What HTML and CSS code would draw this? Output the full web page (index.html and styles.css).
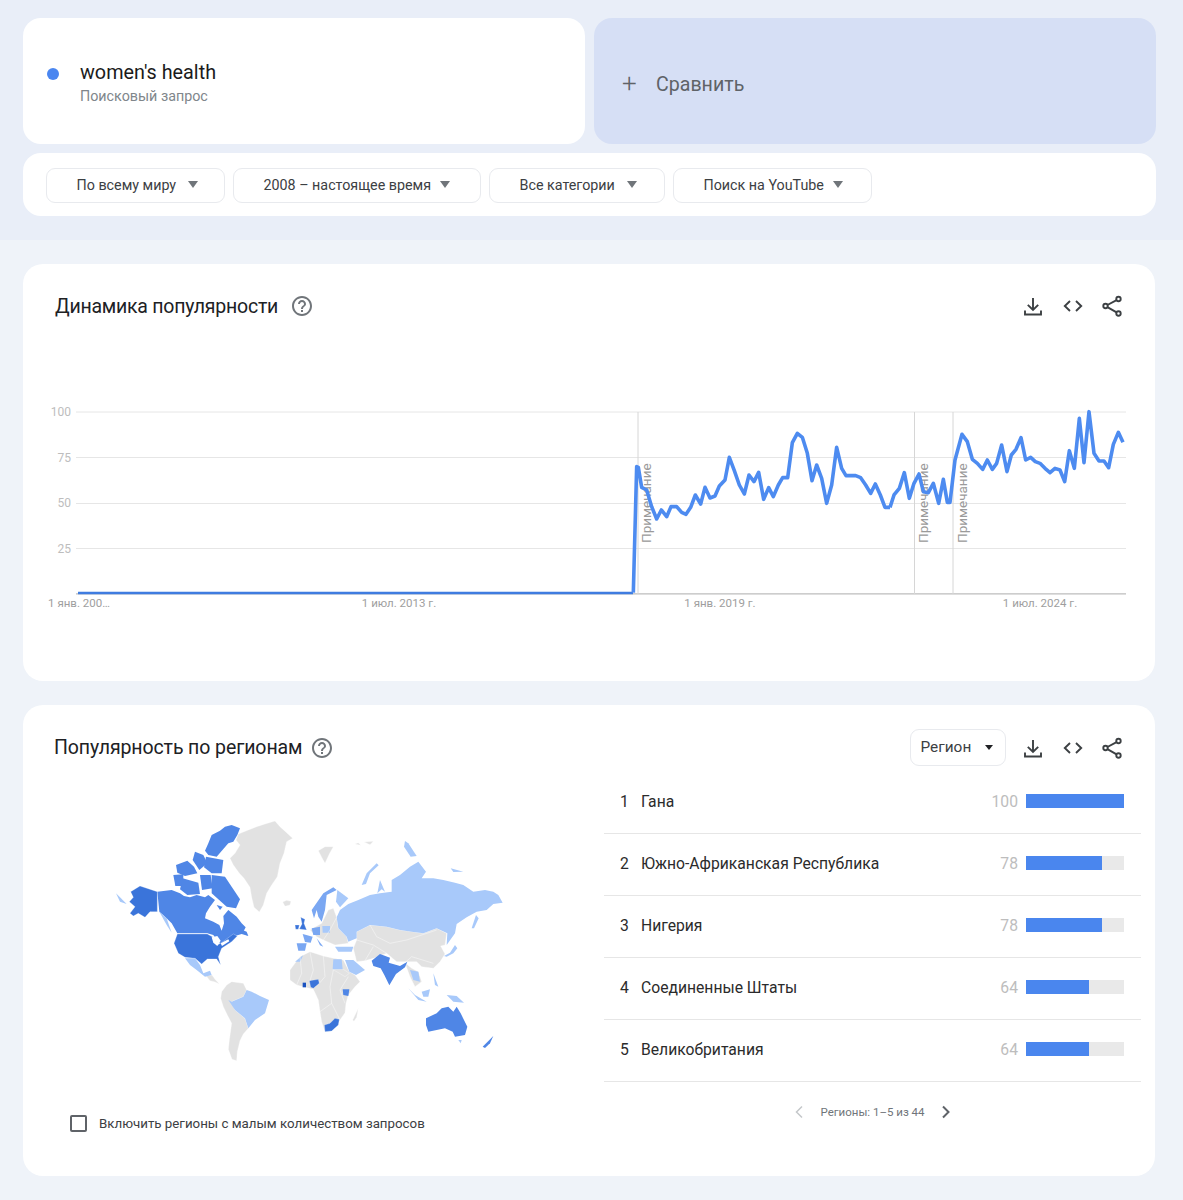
FILE: index.html
```html
<!DOCTYPE html>
<html lang="ru">
<head>
<meta charset="utf-8">
<title>Google Trends</title>
<link rel="stylesheet" href="styles.css">
</head>
<body>
<svg class="defs" width="0" height="0" aria-hidden="true">
  <symbol id="i-help" viewBox="0 0 24 24"><path d="M11 18h2v-2h-2v2zm1-16C6.48 2 2 6.48 2 12s4.48 10 10 10 10-4.48 10-10S17.52 2 12 2zm0 18c-4.41 0-8-3.59-8-8s3.59-8 8-8 8 3.59 8 8-3.59 8-8 8zm0-14c-2.21 0-4 1.79-4 4h2c0-1.1.9-2 2-2s2 .9 2 2c0 2-3 1.75-3 5h2c0-2.25 3-2.5 3-5 0-2.21-1.79-4-4-4z"/></symbol>
  <symbol id="i-down" viewBox="0 0 24 24"><path class="ln" d="M12 4v11.5M6.8 10.8l5.2 5.2 5.2-5.2M4 16.5V20.500h16V16.500"/></symbol>
  <symbol id="i-code" viewBox="0 0 24 24"><path class="ln" d="M9 7l-5.200 5 5.200 5M15 7l5.200 5-5.200 5"/></symbol>
  <symbol id="i-share" viewBox="0 0 24 24"><g class="ln"><circle cx="18.500" cy="5" r="2.200"/><circle cx="5.500" cy="12" r="2.200"/><circle cx="18.500" cy="19.500" r="2.200"/><path d="M16.600 6.100L7.400 11M7.400 13.100l9.200 5.300"/></g></symbol>
</svg>

<section class="top">
  <div class="terms">
    <div class="term">
      <span class="dot"></span>
      <div>
        <div class="term-name">women's health</div>
        <div class="term-type">Поисковый запрос</div>
      </div>
    </div>
    <div class="compare"><span class="plus">+</span><span>Сравнить</span></div>
  </div>
  <div class="filters">
    <div class="pill pill-a">По всему миру<span class="caret"></span></div>
    <div class="pill pill-b">2008 – настоящее время<span class="caret"></span></div>
    <div class="pill pill-c">Все категории<span class="caret"></span></div>
    <div class="pill pill-d">Поиск на YouTube<span class="caret"></span></div>
  </div>
</section>

<main class="lower">
  <section class="card card-trend">
    <header class="head">
      <h2 class="title">Динамика популярности</h2>
      <svg class="help"><use href="#i-help"/></svg>
      <div class="actions">
        <svg class="act"><use href="#i-down"/></svg>
        <svg class="act"><use href="#i-code"/></svg>
        <svg class="act"><use href="#i-share"/></svg>
      </div>
    </header>
    <svg class="chart" viewBox="23 348 1132 333">
      <g class="grid">
        <line x1="76" x2="1126" y1="412" y2="412"/>
        <line x1="76" x2="1126" y1="457.500" y2="457.500"/>
        <line x1="76" x2="1126" y1="503.500" y2="503.500"/>
        <line x1="76" x2="1126" y1="548.500" y2="548.500"/>
      </g>
      <line class="axis" x1="76" x2="1126" y1="593.800" y2="593.800"/>
      <g class="notes">
        <line x1="638" x2="638" y1="412" y2="594"/>
        <line x1="914.500" x2="914.500" y1="412" y2="594"/>
        <line x1="953" x2="953" y1="412" y2="594"/>
      </g>
      <g class="ylab">
        <text x="71" y="416">100</text>
        <text x="71" y="462">75</text>
        <text x="71" y="507">50</text>
        <text x="71" y="553">25</text>
      </g>
      <g class="xlab">
        <text x="79" y="607">1 янв. 200…</text>
        <text x="399" y="607">1 июл. 2013 г.</text>
        <text x="720" y="607">1 янв. 2019 г.</text>
        <text x="1040" y="607">1 июл. 2024 г.</text>
      </g>
      <g class="note-text">
        <text transform="translate(650.500 543) rotate(-90)">Примечание</text>
        <text transform="translate(927.500 543) rotate(-90)">Примечание</text>
        <text transform="translate(966.500 543) rotate(-90)">Примечание</text>
      </g>
      <polyline class="trend base" points="78,593 633,593"/>
      <g transform="translate(620 400) scale(.33333)">
        <polyline class="trend" points="40,578 50,200 55,202 65,262 80,270 95,320 110,357 124,330 140,350 153,320 170,320 185,337 198,343 212,322 226,285 242,312 255,262 270,294 285,288 298,258 315,240 328,172 343,212 358,255 373,282 387,225 402,245 416,217 431,298 446,263 460,290 475,255 488,233 503,233 517,128 532,100 547,112 562,160 576,242 590,195 605,235 620,310 635,255 650,142 665,205 678,227 692,227 707,227 722,233 737,255 752,280 766,252 781,285 795,322 810,322"/>
      </g>
      <g transform="translate(890 400) scale(.33333)">
        <polyline class="trend" points="0,322 12,285 28,265 43,218 58,295 72,250 87,222 100,275 115,278 130,250 146,310 160,238 172,307 180,307 195,180 216,103 232,125 247,178 262,190 278,208 292,180 307,208 320,190 335,135 351,215 364,165 378,148 393,113 407,180 422,172 436,185 450,190 465,205 480,218 495,205 510,210 524,245 538,152 553,205 568,55 582,188 597,35 612,160 627,183 642,183 656,203 670,133 685,97 699,127"/>
      </g>
    </svg>
  </section>

  <section class="card card-region">
    <header class="head head-region">
      <h2 class="title title-region">Популярность по регионам</h2>
      <svg class="help help-region"><use href="#i-help"/></svg>
      <div class="actions">
        <div class="select">Регион<span class="caret caret-dark"></span></div>
        <svg class="act"><use href="#i-down"/></svg>
        <svg class="act"><use href="#i-code"/></svg>
        <svg class="act"><use href="#i-share"/></svg>
      </div>
    </header>
    <div class="region-body">
      <div class="map-col">
        <svg class="map" viewBox="23 772 581 335">
          <g transform="translate(100 810) scale(.33333)">
            <g class="grey">
              <polygon points="415,72 445,60 470,50 495,42 525,33 540,50 560,68 578,85 560,95 552,130 540,160 532,200 515,225 500,250 490,285 478,306 462,292 455,262 450,232 432,205 418,190 400,165 390,145 405,130 420,105 408,90"/>
              <polygon points="548,276 560,271 573,274 570,285 555,289"/>
              <polygon points="318,497 336,495 345,508 358,522 345,516 330,512"/>
              <polygon points="365,545 380,525 395,515 430,520 440,540 430,560 395,575 405,600 435,625 445,655 430,672 420,692 412,725 410,752 396,748 385,718 388,690 395,640 382,615 370,590 362,565"/>
            </g>
            <g class="mid">
              <polygon points="172,245 215,240 240,250 252,258 270,262 290,255 315,262 325,255 345,270 330,290 318,310 315,325 340,335 358,345 365,362 372,340 370,318 385,300 410,320 425,340 437,352 430,365 445,378 425,372 405,378 385,390 365,405 350,390 340,375 322,370 232,370 215,340 195,320 178,305"/>
              <polygon points="395,45 420,55 412,75 400,95 385,100 372,115 350,140 325,135 315,122 325,100 335,75 360,62 375,50"/>
              <polygon points="335,195 375,200 395,230 420,268 408,295 380,290 355,268 335,250"/>
              <polygon points="318,140 370,150 365,190 335,190 312,172"/>
              <polygon points="228,165 262,152 282,170 292,190 255,198 232,188"/>
              <polygon points="220,195 250,193 250,228 226,228"/>
              <polygon points="248,205 295,218 300,252 262,255 240,238"/>
              <polygon points="300,195 332,195 338,235 306,240"/>
              <polygon points="285,125 310,135 322,160 298,180 278,150"/>
              <polygon points="350,285 368,290 360,300"/>
              <polygon points="415,355 440,365 445,378 425,368"/>
            </g>
            <g class="strong">
              <polygon points="92,245 120,228 172,245 172,305 150,305 135,322 115,310 100,318 90,310 105,290 88,275 100,262"/>
              <polygon points="232,372 322,372 345,385 350,405 365,398 400,372 412,378 395,395 365,415 355,440 362,465 350,447 322,447 305,462 285,445 255,442 235,430 222,400"/>
            </g>
            <g class="lake">
              <polygon points="335,382 352,378 362,392 352,408 340,398"/>
              <polygon points="362,400 385,388 388,394 366,408"/>
            </g>
            <g class="light">
              <polygon points="255,445 285,445 300,465 310,490 330,482 335,495 315,500 290,480 270,465"/>
              <polygon points="385,570 395,575 430,560 440,540 455,545 480,558 507,570 495,610 465,630 445,655 435,625 405,600"/>
              <polygon points="48,250 60,262 80,282 60,275"/>
              <polygon points="178,305 200,325 215,368 200,345"/>
            </g>
          </g>
          <g transform="translate(290 830) scale(.33333)">
            <g class="grey">
              <polygon points="85,62 105,50 130,50 118,72 105,100 95,82"/>
              <polygon points="195,42 205,38 212,46"/>
              <polygon points="222,36 250,34 240,44"/>
              <polygon points="0,420 15,400 30,380 60,365 100,378 130,385 160,390 178,425 195,435 210,455 195,470 175,495 168,520 165,548 150,570 135,592 105,605 95,575 90,545 85,510 70,478 45,472 20,465 0,450"/>
              <polygon points="188,570 205,535 200,562 192,574"/>
              <polygon points="60,300 95,280 115,240 130,235 140,262 145,295 170,320 175,340 135,345 100,330 80,320"/>
              <polygon points="200,305 240,285 290,290 330,300 400,310 440,295 470,310 465,345 452,348 465,372 450,395 430,415 395,410 380,395 350,395 320,395 290,370 250,385 225,392 200,395 190,355 200,330"/>
              <polygon points="345,398 365,415 385,425 395,455 375,470 360,440"/>
              <polygon points="128,418 160,418 178,430 165,440 140,425"/>
            </g>
            <g class="light">
              <polygon points="140,262 150,240 175,222 205,210 240,195 270,190 305,185 305,150 330,135 360,110 385,95 408,125 395,145 430,145 460,150 495,158 520,165 550,185 585,180 610,185 625,195 638,218 610,222 590,240 560,245 530,262 500,282 495,310 470,345 472,310 440,295 400,310 365,305 330,300 290,290 240,285 200,305 200,325 175,335 170,320 145,295"/>
              <polygon points="215,165 230,130 260,100 266,106 240,130 228,162"/>
              <polygon points="262,190 270,150 285,185 275,178"/>
              <polygon points="545,295 558,255 566,265 552,295"/>
              <polygon points="345,33 355,40 380,78 362,80 342,50"/>
              <polygon points="482,115 520,125 490,126"/>
              <polygon points="130,388 155,388 158,418 128,418"/>
              <polygon points="165,390 190,390 225,420 198,435 178,425"/>
              <polygon points="15,395 40,375 30,395"/>
              <polygon points="135,350 190,350 185,365 145,365"/>
              <polygon points="97,288 120,288 120,308 98,308"/>
              <polygon points="142,180 175,205 150,232 138,215"/>
              <polygon points="462,378 480,368 495,345 502,355 490,370 470,380"/>
              <polygon points="395,485 420,478 415,500 400,500"/>
              <polygon points="355,475 375,495 410,515 385,510"/>
              <polygon points="430,430 445,470 435,465"/>
              <polygon points="470,495 500,498 522,518 490,515"/>
              <polygon points="505,630 515,630 512,640"/>
              <polygon points="360,420 385,425 390,455 370,450"/>
            </g>
            <g class="soft">
              <polygon points="65,240 100,190 130,172 140,180 110,195 105,240 95,275 85,260 80,240 72,265"/>
              <polygon points="65,295 90,290 90,315 70,315"/>
              <polygon points="38,312 68,320 62,338 45,336"/>
              <polygon points="20,340 50,340 45,362 25,362"/>
              <polygon points="80,325 100,350 90,346"/>
            </g>
            <g class="mid">
              <polygon points="245,392 270,372 300,383 296,398 330,408 352,395 345,412 318,432 298,466 283,435 272,415 250,408"/>
              <polygon points="408,565 440,550 455,535 475,530 490,545 500,530 512,550 532,590 525,615 495,620 488,605 465,595 415,605 408,585"/>
              <polygon points="158,478 178,478 175,498 160,495"/>
              <polygon points="578,650 610,618 600,640 585,654"/>
            </g>
            <g class="strong">
              <polygon points="58,452 85,448 88,460 70,475 62,472"/>
              <polygon points="103,585 120,580 135,565 148,568 145,585 125,603 105,605"/>
              <polygon points="32,262 45,268 42,280 50,300 28,297 36,282"/>
              <polygon points="15,285 28,285 25,298 17,298"/>
            </g>
            <g class="deep">
              <polygon points="38,458 48,458 48,472 38,472"/>
            </g>
            <g class="border">
              <polyline points="30,380 35,430 20,465"/>
              <polyline points="60,365 70,420 60,452"/>
              <polyline points="100,378 105,440 88,460"/>
              <polyline points="130,420 120,470 125,520 90,545"/>
              <polyline points="175,440 150,480 165,520"/>
              <polyline points="125,520 150,570"/>
              <polyline points="240,285 260,320 300,340 350,330 440,300"/>
              <polyline points="200,330 250,345 290,370"/>
              <polyline points="225,392 250,350"/>
              <polyline points="345,398 365,380 430,400"/>
              <polyline points="100,330 120,300 140,262"/>
            </g>
          </g>
        </svg>
        <label class="check"><span class="box"></span>Включить регионы с малым количеством запросов</label>
      </div>
      <div class="table-col">
        <div class="row"><span class="num">1</span><span class="name">Гана</span><span class="val">100</span><span class="track"><span class="fill fill-100"></span></span></div>
        <div class="row"><span class="num">2</span><span class="name">Южно-Африканская Республика</span><span class="val">78</span><span class="track"><span class="fill fill-78"></span></span></div>
        <div class="row"><span class="num">3</span><span class="name">Нигерия</span><span class="val">78</span><span class="track"><span class="fill fill-78"></span></span></div>
        <div class="row"><span class="num">4</span><span class="name">Соединенные Штаты</span><span class="val">64</span><span class="track"><span class="fill fill-64"></span></span></div>
        <div class="row"><span class="num">5</span><span class="name">Великобритания</span><span class="val">64</span><span class="track"><span class="fill fill-64"></span></span></div>
        <div class="pager">
          <svg class="chev chev-off" viewBox="0 0 12 16"><path d="M9 2.500L3.500 8 9 13.500"/></svg>
          <span>Регионы: 1–5 из 44</span>
          <svg class="chev" viewBox="0 0 12 16"><path d="M3 2.500L8.500 8 3 13.500"/></svg>
        </div>
      </div>
    </div>
  </section>
</main>
</body>
</html>
```

FILE: styles.css
```css
* { box-sizing: border-box; }
html, body { margin: 0; padding: 0; }
body {
  width: 1183px;
  height: 1200px;
  overflow: hidden;
  background: #eff3f9;
  font-family: Roboto, "Noto Sans", sans-serif;
  color: #202124;
}
.defs { position: absolute; }

.top {
  background: #e9eef8;
  padding: 18px 27px 24px 23px;
  height: 240px;
}
.terms {
  display: grid;
  grid-template-columns: 562px 562px;
  gap: 9px;
  height: 126px;
}
.term {
  background: #fff;
  border-radius: 18px;
  display: flex;
  align-items: center;
  padding: 4px 0 0 24px;
}
.dot {
  width: 12px;
  height: 12px;
  border-radius: 50%;
  background: #4a86f0;
  margin-right: 21px;
  margin-bottom: 18px;
}
.term-name { font-size: 19.800px; line-height: 26px; color: #1b1b1b; }
.term-type { font-size: 14.300px; line-height: 20px; color: #80868b; }
.compare {
  background: #d6dff5;
  border-radius: 18px;
  display: flex;
  align-items: center;
  padding: 6px 0 0 28px;
  font-size: 19.600px;
  color: #5f6368;
}
.plus { font-size: 26px; font-weight: 300; width: 34px; line-height: 26px; margin-top: -3px; }

.filters {
  margin-top: 9px;
  background: #fff;
  border-radius: 18px;
  height: 63px;
  display: flex;
  align-items: center;
  gap: 8px;
  padding: 1px 0 0 23px;
}
.pill {
  height: 35px;
  border: 1px solid #e8eaee;
  border-radius: 9px;
  display: flex;
  align-items: center;
  padding-left: 29.500px;
  font-size: 14.300px;
  color: #3c4043;
}
.pill-a { width: 179px; }
.pill-b { width: 248px; }
.pill-c { width: 176px; }
.pill-d { width: 199px; }
.caret {
  width: 0;
  height: 0;
  border-left: 5.500px solid transparent;
  border-right: 5.500px solid transparent;
  border-top: 7px solid #70757a;
  margin-left: 9px;
  margin-top: -2px;
}
.pill-a .caret { margin-left: 11.500px; }
.pill-c .caret { margin-left: 12.500px; }

.lower {
  padding: 24px 27px 24px 23px;
  display: flex;
  flex-direction: column;
  gap: 24px;
}
.card { background: #fff; border-radius: 20px; width: 1132px; }
.card-trend { height: 417px; }
.card-region { height: 471px; }
.head {
  display: flex;
  align-items: flex-start;
  height: 84px;
  padding: 30px 31px 0 32px;
}
.title {
  margin: 0;
  font-size: 19.500px;
  letter-spacing: -.24px;
  font-weight: 400;
  line-height: 26px;
  color: #202124;
}
.help { width: 24px; height: 24px; margin-left: 12px; fill: #70757a; flex: none; }
.actions { margin-left: auto; display: flex; align-items: center; gap: 15.500px; }
.act { width: 24px; height: 24px; flex: none; overflow: visible; }
.ln { fill: none; stroke: #3c4043; stroke-width: 1.900; }
.chart { display: block; width: 1132px; height: 333px; }

.grid line { stroke: #e6e6e6; stroke-width: 1; }
.axis { stroke: #bdbdbd; stroke-width: 1.200; }
.notes line { stroke: #d6d6d6; stroke-width: 1; }
.ylab text { font-size: 12px; fill: #bdbdbd; text-anchor: end; }
.xlab text { font-size: 11.500px; fill: #9e9e9e; text-anchor: middle; }
.note-text text { font-size: 13.500px; fill: #9a9a9a; }
.trend {
  fill: none;
  stroke: #4d8bf0;
  stroke-width: 3.600;
  stroke-linejoin: round;
  vector-effect: non-scaling-stroke;
}
.base { stroke: #3f7ce0; stroke-width: 2.400; }

.head-region { height: 67px; padding: 24px 31px 6px 31px; align-items: center; }
.title-region { font-size: 19.500px; letter-spacing: -.1px; }
.help-region { margin-left: 8px; }
.select {
  width: 96px;
  height: 37px;
  border: 1px solid #e8eaee;
  border-radius: 9px;
  display: flex;
  align-items: center;
  padding: 0 0 1px 10px;
  font-size: 15.400px;
  color: #3c4043;
}
.caret-dark {
  border-left-width: 4.500px;
  border-right-width: 4.500px;
  border-top-width: 5px;
  border-top-color: #202124;
  margin-left: 14px;
  margin-top: 0;
}
.region-body {
  display: grid;
  grid-template-columns: 581px 537px;
}
.map { display: block; width: 581px; height: 335px; filter: blur(.35px); }
.grey polygon { fill: #e2e2e2; stroke: #fff; stroke-width: 1; stroke-linejoin: round; }
.light polygon { fill: #a8c9fa; }
.soft polygon { fill: #7aa7f2; }
.mid polygon { fill: #4f86e6; }
.strong polygon { fill: #3a74da; stroke: #fff; stroke-width: .8; }
.deep polygon { fill: #1a52c0; }
.lake polygon { fill: #fff; }
.border polyline { fill: none; stroke: #fff; stroke-width: 1.300; }
.check {
  display: flex;
  align-items: center;
  margin: 7px 0 0 47px;
  font-size: 13.300px;
  color: #3c4043;
  height: 18px;
}
.box {
  width: 17px;
  height: 17px;
  border: 2px solid #5f6368;
  border-radius: 2px;
  margin-right: 12px;
}
.row {
  height: 62px;
  border-bottom: 1px solid #e6e6e6;
  display: flex;
  align-items: center;
  padding: 0 17px 3px 16px;
  font-size: 15.700px;
  color: #2b2b2b;
}
.num { width: 21px; }
.name { flex: 1; }
.val { color: #bdbdbd; margin-right: 8px; }
.track { width: 98px; height: 14px; background: #e9e9e9; display: block; }
.fill { display: block; height: 14px; background: #4a86ee; }
.fill-100 { width: 100%; }
.fill-78 { width: 78%; }
.fill-64 { width: 64%; }
.pager {
  height: 60px;
  display: flex;
  align-items: center;
  justify-content: center;
  gap: 15px;
  font-size: 11.500px;
  color: #70757a;
}
.chev { width: 12px; height: 16px; }
.chev path { fill: none; stroke: #5f6368; stroke-width: 2; }
.chev-off path { stroke: #c4c7ca; stroke-width: 1.500; }
```
